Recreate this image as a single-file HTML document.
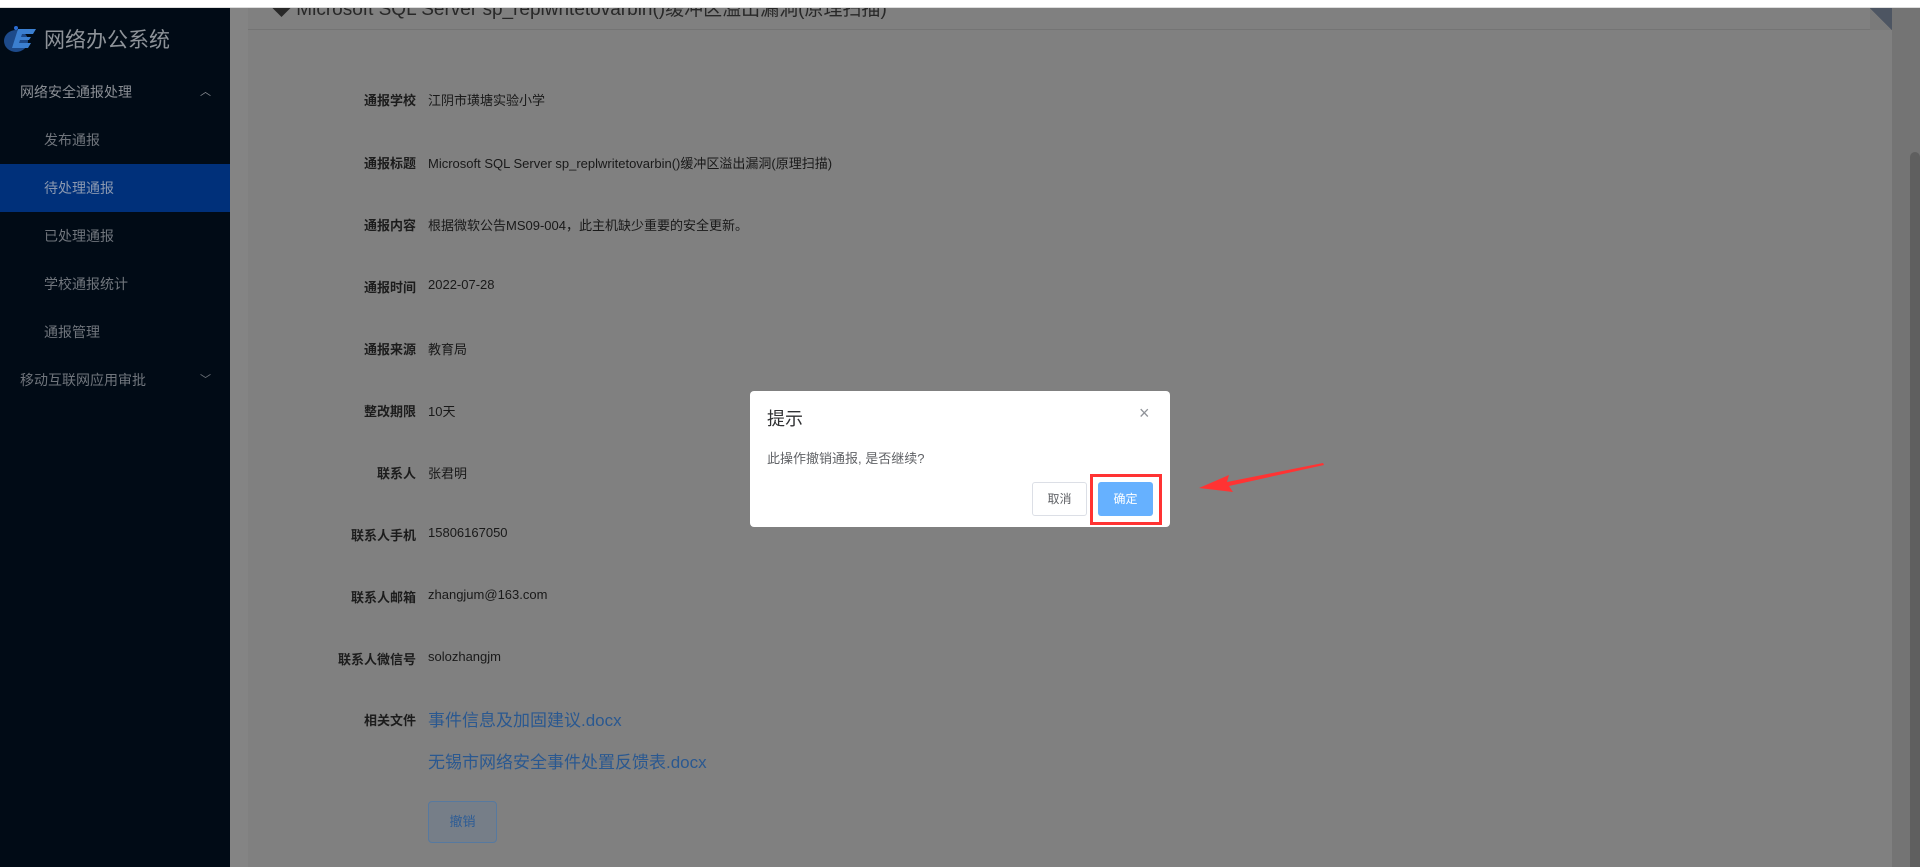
<!DOCTYPE html>
<html><head><meta charset="utf-8"><style>
*{margin:0;padding:0;box-sizing:border-box}
body{width:1920px;height:867px;overflow:hidden;background:#7f7f7f;font-family:"Liberation Sans","Noto Sans CJK SC",sans-serif;position:relative}
.top{position:absolute;left:0;top:0;width:1920px;height:8px;background:#fff;border-bottom:1px solid #ddd;z-index:5}
.side{position:absolute;left:0;top:8px;width:230px;height:859px;background:#010b16}
.logo{position:absolute;left:2px;top:16px;width:40px;height:30px}
.brand{position:absolute;left:44px;top:16px;color:#8e9399;font-size:21px}
.mi{position:absolute;left:0;width:230px;height:48px;line-height:48px;color:#70757c;font-size:14px}
.act{background:#00307a;color:#8a98b0}
.gap{position:absolute;left:230px;top:8px;width:18px;height:859px;background:#848484}
.card{position:absolute;left:248px;top:8px;width:1644px;height:859px;background:#808080}
.hd{position:absolute;left:0;top:0;width:100%;height:22px;border-bottom:1px solid #747474;overflow:hidden}
.hd span{position:absolute;left:24px;top:-14px;font-size:19px;color:#282828}
.fold{position:absolute;left:1622px;top:0;width:22px;height:22px;background:linear-gradient(45deg,#7a7a7a 50%,#4d5562 50%)}
.track{position:absolute;left:1892px;top:8px;width:28px;height:859px;background:#747474}
.thumb{position:absolute;left:1910px;top:152px;width:10px;height:715px;background:#5f5f5f;border-radius:5px 5px 0 0}
.lb{position:absolute;width:168px;left:248px;text-align:right;font-size:13px;color:#1c1c1c;font-weight:bold}
.v{position:absolute;left:428px;font-size:13px;color:#191919}
.f{position:absolute;left:428px;font-size:17px;color:#2a5890}
.btn{position:absolute;left:428px;top:801px;width:69px;height:42px;border:1px solid #57799f;border-radius:4px;background:#767e88;color:#2d5c95;font-size:13px;text-align:center;line-height:40px}
.dlg{position:absolute;left:750px;top:391px;width:420px;height:136px;background:#fff;border-radius:4px}
.dt{position:absolute;left:17px;top:14px;font-size:18px;color:#303133}
.dx{position:absolute;left:389px;top:12px;font-size:18px;color:#909399}
.dm{position:absolute;left:17px;top:57px;font-size:13px;color:#606266}
.b1{position:absolute;left:282px;top:91px;width:55px;height:34px;border:1px solid #dcdfe6;border-radius:3px;font-size:12px;color:#606266;text-align:center;line-height:32px}
.b2{position:absolute;left:348px;top:91px;width:55px;height:34px;background:#66b1ff;border-radius:3px;font-size:12px;color:#fff;text-align:center;line-height:34px}
.red{position:absolute;left:1090px;top:474px;width:72px;height:51px;border:3px solid #f33}
</style></head><body>
<div class="top"></div>
<div class="side">
<svg class="logo" viewBox="0 0 40 30"><ellipse cx="14" cy="17" rx="12" ry="11" fill="#1d4a8a"/><path d="M16 5h18l-3 5H20l-1 3h10l-2 3H18l-1 3h12l-3 5H10z" fill="#3b7fd0"/><circle cx="14" cy="4" r="2" fill="#2a6bd0"/></svg>
<div class="brand">网络办公系统</div>
<div class="mi" style="top:60px;padding-left:20px;color:#8a8e94">网络安全通报处理<span style="position:absolute;left:200px;font-size:11px">︿</span></div>
<div class="mi" style="top:108px;padding-left:44px">发布通报</div>
<div class="mi act" style="top:156px;padding-left:44px">待处理通报</div>
<div class="mi" style="top:204px;padding-left:44px">已处理通报</div>
<div class="mi" style="top:252px;padding-left:44px">学校通报统计</div>
<div class="mi" style="top:300px;padding-left:44px">通报管理</div>
<div class="mi" style="top:348px;padding-left:20px">移动互联网应用审批<span style="position:absolute;left:200px;font-size:11px">﹀</span></div>
</div>
<div class="gap"></div>
<div class="card"><div class="hd"><span>◆ Microsoft SQL Server sp_replwritetovarbin()缓冲区溢出漏洞(原理扫描)</span></div><div class="fold"></div></div>
<div class="track"></div><div class="thumb"></div>
<div class="lb" style="top:90px">通报学校</div><div class="v" style="top:90px">江阴市璜塘实验小学</div>
<div class="lb" style="top:153px">通报标题</div><div class="v" style="top:153px">Microsoft SQL Server sp_replwritetovarbin()缓冲区溢出漏洞(原理扫描)</div>
<div class="lb" style="top:215px">通报内容</div><div class="v" style="top:215px">根据微软公告MS09-004，此主机缺少重要的安全更新。</div>
<div class="lb" style="top:277px">通报时间</div><div class="v" style="top:277px">2022-07-28</div>
<div class="lb" style="top:339px">通报来源</div><div class="v" style="top:339px">教育局</div>
<div class="lb" style="top:401px">整改期限</div><div class="v" style="top:401px">10天</div>
<div class="lb" style="top:463px">联系人</div><div class="v" style="top:463px">张君明</div>
<div class="lb" style="top:525px">联系人手机</div><div class="v" style="top:525px">15806167050</div>
<div class="lb" style="top:587px">联系人邮箱</div><div class="v" style="top:587px">zhangjum@163.com</div>
<div class="lb" style="top:649px">联系人微信号</div><div class="v" style="top:649px">solozhangjm</div>
<div class="lb" style="top:710px">相关文件</div><div class="f" style="top:706px">事件信息及加固建议.docx</div>
<div class="f" style="top:748px">无锡市网络安全事件处置反馈表.docx</div>
<div class="btn">撤销</div>
<div class="dlg"><div class="dt">提示</div><div class="dx">×</div><div class="dm">此操作撤销通报, 是否继续?</div><div class="b1">取消</div><div class="b2">确定</div></div>
<div class="red"></div>
<svg style="position:absolute;left:1195px;top:455px" width="135" height="40"><path d="M128 8 L32 27 L34 20 L4 33 L38 37 L34 31 L129 10 Z" fill="#f33"/></svg>
</body></html>
